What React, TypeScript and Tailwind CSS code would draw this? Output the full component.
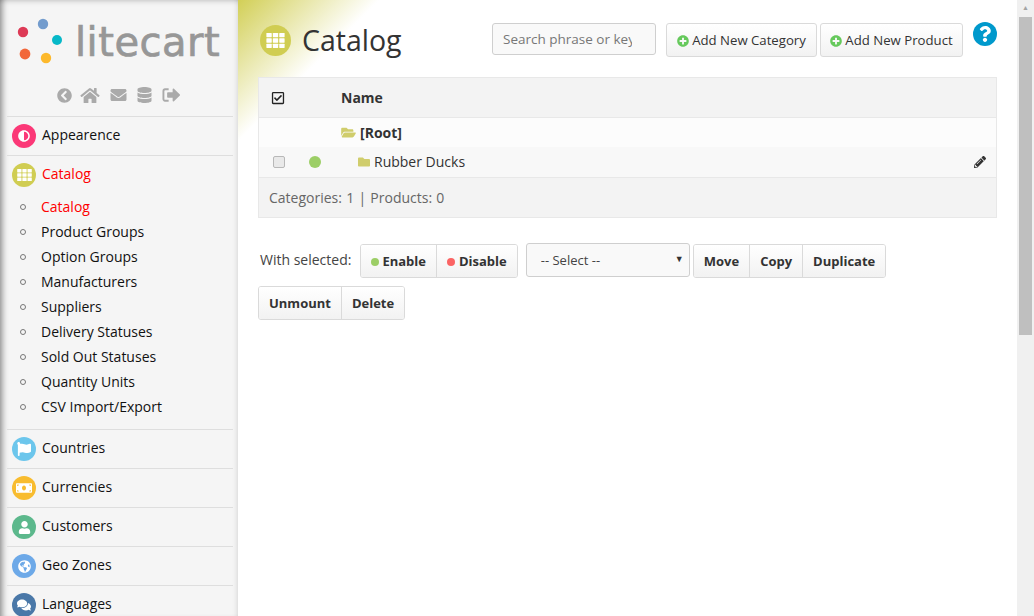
import React from 'react';
import {
  FaAdjust,
  FaChevronCircleLeft,
  FaComments,
  FaDatabase,
  FaEnvelope,
  FaFlag,
  FaFolder,
  FaFolderOpen,
  FaGlobeAmericas,
  FaHome,
  FaMoneyBill,
  FaPencilAlt,
  FaPlusCircle,
  FaQuestion,
  FaRegCheckSquare,
  FaUser,
} from 'react-icons/fa';

const subItems = [
  'Catalog',
  'Product Groups',
  'Option Groups',
  'Manufacturers',
  'Suppliers',
  'Delivery Statuses',
  'Sold Out Statuses',
  'Quantity Units',
  'CSV Import/Export',
];

const GridIcon = ({ className }: { className: string }) => (
  <svg viewBox="0 0 17 14" className={`fill-current ${className}`}>
    {[0, 5, 10].map((y) =>
      [0, 6, 12].map((x) => <rect key={`${x}-${y}`} x={x} y={y} width="5" height="4" rx="0.4" />),
    )}
  </svg>
);

const MenuRow = ({
  color,
  icon,
  label,
  active,
}: {
  color: string;
  icon: React.ReactNode;
  label: string;
  active?: boolean;
}) => (
  <div className="flex h-[39px] shrink-0 items-center border-t border-[#dedede] pl-[5px]">
    <span className={`flex h-6 w-6 shrink-0 items-center justify-center rounded-full text-white ${color}`}>{icon}</span>
    <span className={`mb-[3px] ml-1.5 text-[14px] ${active ? 'text-[#f00]' : 'text-[#111]'}`}>{label}</span>
  </div>
);

const SignOutIcon = () => (
  <svg viewBox="0 0 20 16" className="h-4 w-[19px] fill-current">
    <path d="M7 1H3.2C1.6 1 .5 2.1.5 3.7v8.6C.5 13.9 1.6 15 3.2 15H7v-2H3.4c-.6 0-.9-.3-.9-.9V3.9c0-.6.3-.9.9-.9H7z" />
    <path d="M12 1.2c-.4 0-.8.3-.8.8v3H6.2c-.5 0-.8.4-.8.8v4.4c0 .4.3.8.8.8h5v3c0 .5.4.8.8.8.2 0 .4-.1.6-.2l6.2-6c.3-.3.3-.9 0-1.2l-6.2-6c-.2-.1-.4-.2-.6-.2z" />
  </svg>
);

const Sidebar = () => (
  <aside className="flex h-full w-[238px] shrink-0 flex-col overflow-hidden bg-[#f5f5f5] pl-[7px] pr-[5px] shadow-[inset_7px_0_6px_-5px_rgba(0,0,0,0.45),inset_0_6px_6px_-6px_rgba(0,0,0,0.25),inset_-6px_0_5px_-5px_rgba(0,0,0,0.12)]">
    <div className="flex h-[72px] shrink-0 items-start">
      <svg viewBox="7 0 70 72" className="h-[72px] w-[70px] shrink-0">
        <circle cx="43" cy="24" r="5.2" fill="#739ccd" />
        <circle cx="57" cy="40" r="5" fill="#06b8c8" />
        <circle cx="23" cy="32" r="5.2" fill="#dd3a56" />
        <circle cx="25" cy="54" r="5.4" fill="#f2673a" />
        <circle cx="46" cy="58" r="5.2" fill="#fdb92c" />
      </svg>
      <span className="-ml-[2px] mt-[18px] font-['DejaVu_Sans',sans-serif] text-[40px] leading-[48px] tracking-[0.5px] text-[#979797] [-webkit-text-stroke:0.7px_#979797]">litecart</span>
    </div>
    <div className="flex h-[44px] shrink-0 items-center justify-center gap-[10px] pr-[2px] pt-[2px] text-[#aaaaaa]">
      <FaChevronCircleLeft className="-mr-[2px] h-[15px] w-[15px]" />
      <FaHome className="h-[17px] w-[20px]" />
      <FaEnvelope className="h-[16px] w-[17px]" />
      <FaDatabase className="h-[16px] w-[15px]" />
      <SignOutIcon />
    </div>
    <MenuRow color="bg-[#fb3877]" icon={<FaAdjust className="h-3 w-3" />} label="Appearence" />
    <MenuRow color="bg-[#d0cd52]" icon={<GridIcon className="h-[12px] w-[15px]" />} label="Catalog" active />
    <ul className="mb-[10px] shrink-0">
      {subItems.map((item, i) => (
        <li key={item} className="flex h-[25px] items-center pl-[13px] text-[14px]">
          <span className="mr-[15px] h-[6px] w-[6px] shrink-0 rounded-full border-[1.5px] border-[#777]" />
          <span className={i === 0 ? 'text-[#f00]' : 'text-[#111]'}>{item}</span>
        </li>
      ))}
    </ul>
    <MenuRow color="bg-[#6cc6ec]" icon={<FaFlag className="h-[14px] w-[14px]" />} label="Countries" />
    <MenuRow color="bg-[#f8bc2f]" icon={<FaMoneyBill className="h-4 w-4" />} label="Currencies" />
    <MenuRow color="bg-[#5cb88c]" icon={<FaUser className="h-[13px] w-[13px]" />} label="Customers" />
    <MenuRow color="bg-[#6da9e8]" icon={<FaGlobeAmericas className="h-[13px] w-[13px]" />} label="Geo Zones" />
    <MenuRow color="bg-[#4a78a8]" icon={<FaComments className="h-[14px] w-[14px]" />} label="Languages" />
  </aside>
);

const GroupButton = ({ children, first }: { children: React.ReactNode; first?: boolean }) => (
  <button
    className={`flex h-full items-center gap-1 bg-gradient-to-b from-white to-[#f2f2f2] px-[10px] pt-[2px] text-[13px] font-bold text-[#333] ${first ? '' : 'border-l border-[#dadada]'}`}
  >
    {children}
  </button>
);

const ButtonGroup = ({ children }: { children: React.ReactNode }) => (
  <div className="flex h-[34px] overflow-hidden rounded-[3px] border border-[#dadada]">{children}</div>
);

const AddButton = ({ label, width }: { label: string; width: string }) => (
  <button className={`flex h-[34px] items-center justify-center gap-[3px] rounded-[3px] border border-[#dadada] bg-gradient-to-b from-white to-[#f2f2f2] pt-[1px] text-[13.2px] text-[#333] ${width}`}>
    <FaPlusCircle className="h-3 w-3 text-[#66c95c]" />
    {label}
  </button>
);

const CatalogTable = () => (
  <div className="mt-[20px] border border-[#e8e8e8] text-[14px] text-[#333]">
    <div className="flex h-[40px] items-center border-b border-[#e8e8e8] bg-[#f3f3f3]">
      <span className="flex w-[82px] justify-start pl-[12px]">
        <FaRegCheckSquare className="h-[14px] w-[14px] text-[#222]" />
      </span>
      <span className="font-bold">Name</span>
    </div>
    <div className="flex h-[29px] items-center bg-[#fcfcfc] pb-[1px] pl-[82px] font-bold">
      <FaFolderOpen className="h-[13px] w-[15px] text-[#d0cd6c]" />
      <span className="ml-[4px]">[Root]</span>
    </div>
    <div className="flex h-[31px] items-center border-b border-[#e8e8e8] bg-[#f8f8f8] pb-[1px] pr-[10px]">
      <input type="checkbox" className="ml-[14px] h-[12px] w-[12px] appearance-none rounded-[2px] border border-[#b8b8b8] bg-[#e9e9e9]" />
      <span className="ml-[24px] h-3 w-3 rounded-full bg-[#9cce66]" />
      <FaFolder className="ml-[36px] h-[12px] w-[14px] text-[#d0cd6c]" />
      <span className="ml-[3px]">Rubber Ducks</span>
      <FaPencilAlt className="ml-auto h-3 w-3 text-[#333]" />
    </div>
    <div className="flex h-[39px] items-center bg-[#f3f3f3] pl-[10px] text-[#666] [word-spacing:0.6px]">Categories: 1 | Products: 0</div>
  </div>
);

const BulkActions = () => (
  <div className="mt-[25px] flex flex-wrap items-center gap-y-[7px]">
    <span className="mb-[4px] ml-[2px] mr-[9px] text-[14px] text-[#444]">With selected:</span>
    <ButtonGroup>
      <GroupButton first>
        <span className="-mr-[1px] h-2 w-2 rounded-full bg-[#9cce66]" />
        Enable
      </GroupButton>
      <GroupButton>
        <span className="h-2 w-2 rounded-full bg-[#fb6464]" />
        Disable
      </GroupButton>
    </ButtonGroup>
    <div className="relative mb-[2px] ml-[8px] mr-[3px]">
      <select className="block h-[34px] w-[164px] appearance-none rounded-[3px] border border-[#cfcfcf] bg-[#f9f9f9] pl-[14px] pt-[1px] text-[13px] text-[#444]">
        <option>-- Select --</option>
      </select>
      <span className="pointer-events-none absolute right-[6px] top-[9px] text-[9px] leading-[14px] text-[#333]">▼</span>
    </div>
    <ButtonGroup>
      <GroupButton first>Move</GroupButton>
      <GroupButton>Copy</GroupButton>
      <GroupButton>Duplicate</GroupButton>
    </ButtonGroup>
    <ButtonGroup>
      <GroupButton first>Unmount</GroupButton>
      <GroupButton>Delete</GroupButton>
    </ButtonGroup>
  </div>
);

const Scrollbar = () => (
  <div className="flex h-full w-[17px] shrink-0 flex-col bg-[#f0f0f0]">
    <div className="flex h-[17px] items-center justify-center text-[7px] text-[#a3a3a3]">▲</div>
    <div className="ml-[2px] h-[318px] w-[13px] bg-[#bfbfbf]" />
  </div>
);

export default function App() {
  return (
    <div className="flex h-[616px] w-[1034px] overflow-hidden bg-white font-['Open_Sans',sans-serif]">
      <Sidebar />
      <main className="h-full min-w-0 flex-1 bg-[linear-gradient(135deg,#d2cf56_0px,#ffffff_100px)] pl-[20px] pr-[20px] pt-[23px]">
        <div className="flex h-[34px] items-start">
          <span className="ml-[2px] mt-[2px] flex h-[31px] w-[31px] items-center justify-center rounded-full bg-[#d0cd52] text-white">
            <GridIcon className="h-[15px] w-[19px]" />
          </span>
          <h1 className="ml-[11px] text-[28.5px] leading-[34px] text-[#333]">Catalog</h1>
          <input
            placeholder="Search phrase or keyword"
            className="ml-auto h-[32px] w-[164px] rounded-[3px] border border-[#cfcfcf] bg-[#f9f9f9] pl-[10px] pr-[23px] text-[13.5px] placeholder:text-[#777]"
          />
          <div className="ml-[10px] flex gap-[3px]">
            <AddButton label="Add New Category" width="w-[151px]" />
            <AddButton label="Add New Product" width="w-[143px]" />
          </div>
          <span className="-mt-[1px] ml-[10px] flex h-6 w-6 items-center justify-center rounded-full bg-[#0099cc] text-white">
            <FaQuestion className="h-4 w-4" />
          </span>
        </div>
        <CatalogTable />
        <BulkActions />
      </main>
      <Scrollbar />
    </div>
  );
}
